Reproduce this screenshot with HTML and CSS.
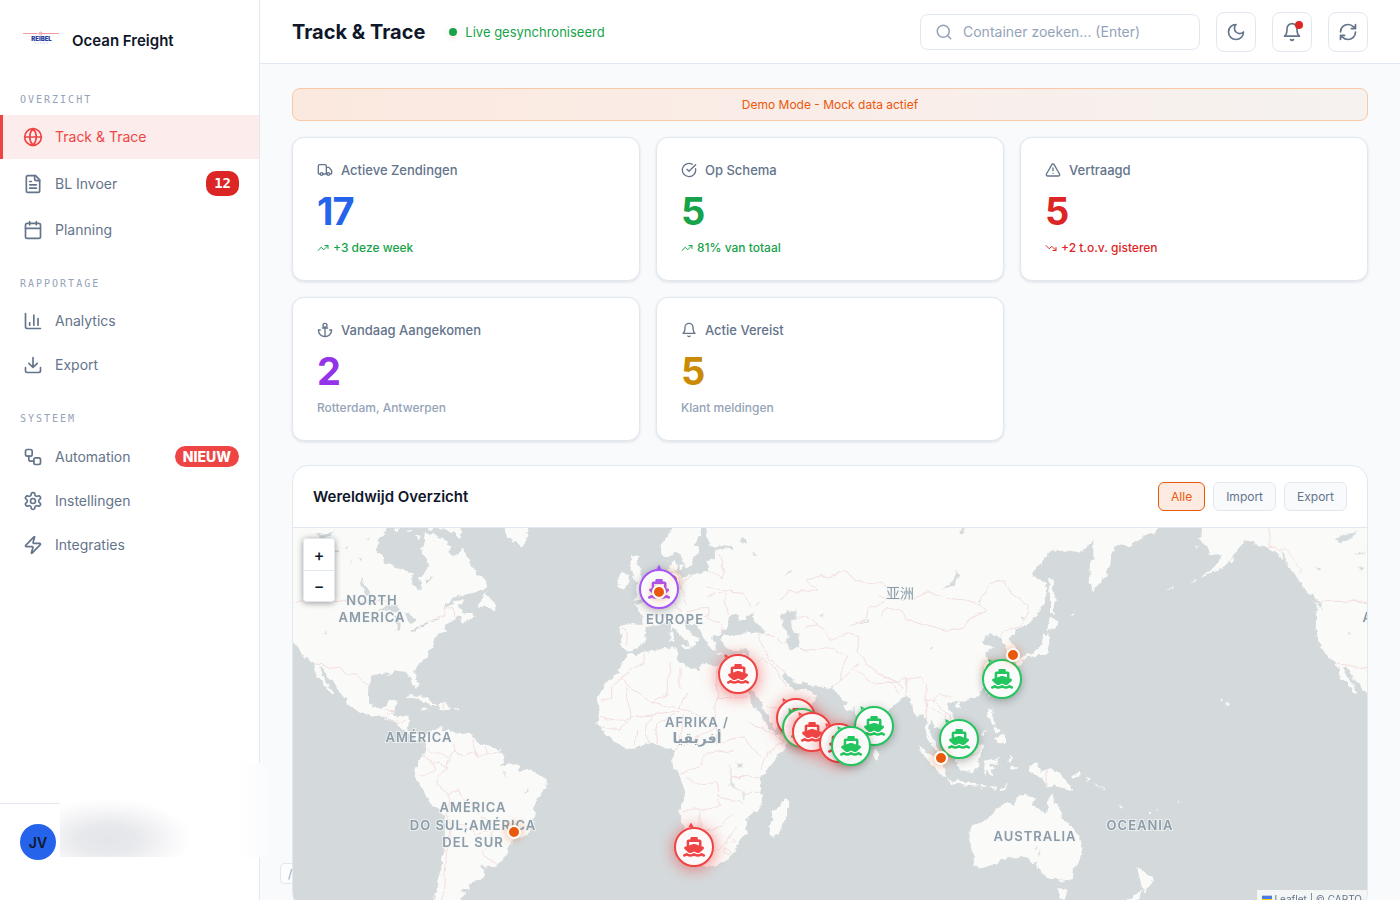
FILE: index.html
```html
<!DOCTYPE html>
<html lang="nl">
<head>
<meta charset="utf-8">
<title>Track &amp; Trace - Ocean Freight</title>
<link rel="stylesheet" href="styles.css">
</head>
<body>
<svg class="sprite" aria-hidden="true">
  <symbol id="globe" viewBox="0 0 24 24"><circle cx="12" cy="12" r="10"/><path d="M2 12h20M12 2a15.3 15.3 0 0 1 4 10 15.3 15.3 0 0 1-4 10 15.3 15.3 0 0 1-4-10 15.3 15.3 0 0 1 4-10z"/></symbol>
  <symbol id="file" viewBox="0 0 24 24"><path d="M15 2H6a2 2 0 0 0-2 2v16a2 2 0 0 0 2 2h12a2 2 0 0 0 2-2V7z"/><path d="M14 2v4a2 2 0 0 0 2 2h4M10 9H8M16 13H8M16 17H8"/></symbol>
  <symbol id="calendar" viewBox="0 0 24 24"><path d="M8 2v4M16 2v4M3 10h18"/><rect x="3" y="4" width="18" height="18" rx="2"/></symbol>
  <symbol id="chart" viewBox="0 0 24 24"><path d="M3 3v16a2 2 0 0 0 2 2h16M18 17V9M13 17V5M8 17v-3"/></symbol>
  <symbol id="download" viewBox="0 0 24 24"><path d="M21 15v4a2 2 0 0 1-2 2H5a2 2 0 0 1-2-2v-4M7 10l5 5 5-5M12 15V3"/></symbol>
  <symbol id="workflow" viewBox="0 0 24 24"><rect x="3" y="3" width="8" height="8" rx="2"/><path d="M7 11v4a2 2 0 0 0 2 2h4"/><rect x="13" y="13" width="8" height="8" rx="2"/></symbol>
  <symbol id="gear" viewBox="0 0 24 24"><path d="M12.22 2h-.44a2 2 0 0 0-2 2v.18a2 2 0 0 1-1 1.73l-.43.25a2 2 0 0 1-2 0l-.15-.08a2 2 0 0 0-2.73.73l-.22.38a2 2 0 0 0 .73 2.73l.15.1a2 2 0 0 1 1 1.72v.51a2 2 0 0 1-1 1.74l-.15.09a2 2 0 0 0-.73 2.73l.22.38a2 2 0 0 0 2.73.73l.15-.08a2 2 0 0 1 2 0l.43.25a2 2 0 0 1 1 1.73V20a2 2 0 0 0 2 2h.44a2 2 0 0 0 2-2v-.18a2 2 0 0 1 1-1.73l.43-.25a2 2 0 0 1 2 0l.15.08a2 2 0 0 0 2.73-.73l.22-.39a2 2 0 0 0-.73-2.73l-.15-.08a2 2 0 0 1-1-1.74v-.5a2 2 0 0 1 1-1.74l.15-.09a2 2 0 0 0 .73-2.73l-.22-.38a2 2 0 0 0-2.73-.73l-.15.08a2 2 0 0 1-2 0l-.43-.25a2 2 0 0 1-1-1.73V4a2 2 0 0 0-2-2z"/><circle cx="12" cy="12" r="3"/></symbol>
  <symbol id="zap" viewBox="0 0 24 24"><path d="M4 14a1 1 0 0 1-.78-1.63l9.9-10.2a.5.5 0 0 1 .86.46l-1.92 6.02A1 1 0 0 0 13 10h7a1 1 0 0 1 .78 1.63l-9.9 10.2a.5.5 0 0 1-.86-.46l1.92-6.02A1 1 0 0 0 11 14z"/></symbol>
  <symbol id="search" viewBox="0 0 24 24"><circle cx="11" cy="11" r="8"/><path d="m21 21-4.3-4.3"/></symbol>
  <symbol id="moon" viewBox="0 0 24 24"><path d="M12 3a6 6 0 0 0 9 9 9 9 0 1 1-9-9z"/></symbol>
  <symbol id="bell" viewBox="0 0 24 24"><path d="M6 8a6 6 0 0 1 12 0c0 7 3 9 3 9H3s3-2 3-9M10.3 21a1.94 1.94 0 0 0 3.4 0"/></symbol>
  <symbol id="refresh" viewBox="0 0 24 24"><path d="M3 12a9 9 0 0 1 9-9 9.75 9.75 0 0 1 6.74 2.74L21 8M21 3v5h-5M21 12a9 9 0 0 1-9 9 9.75 9.75 0 0 1-6.74-2.74L3 16M8 16H3v5"/></symbol>
  <symbol id="truck" viewBox="0 0 24 24"><path d="M14 18V6a2 2 0 0 0-2-2H4a2 2 0 0 0-2 2v11a1 1 0 0 0 1 1h2M15 18H9M19 18h2a1 1 0 0 0 1-1v-3.65a1 1 0 0 0-.22-.62l-3.48-4.35A1 1 0 0 0 17.52 8H14"/><circle cx="17" cy="18" r="2"/><circle cx="7" cy="18" r="2"/></symbol>
  <symbol id="check" viewBox="0 0 24 24"><path d="M21.8 10A10 10 0 1 1 17 3.34M9 11l3 3L22 4"/></symbol>
  <symbol id="alert" viewBox="0 0 24 24"><path d="m21.73 18-8-14a2 2 0 0 0-3.48 0l-8 14A2 2 0 0 0 4 21h16a2 2 0 0 0 1.73-3M12 9v4M12 17h.01"/></symbol>
  <symbol id="anchor" viewBox="0 0 24 24"><path d="M12 22V8M5 12H2a10 10 0 0 0 20 0h-3M8 9h8"/><circle cx="12" cy="5" r="3"/></symbol>
  <symbol id="up" viewBox="0 0 24 24"><path d="m22 7-8.5 8.5-5-5L2 17M16 7h6v6"/></symbol>
  <symbol id="down" viewBox="0 0 24 24"><path d="m22 17-8.5-8.5-5 5L2 7M16 17h6v-6"/></symbol>
</svg>

<div class="app">
  <aside class="sidebar">
    <div class="brand">
      <svg class="logo" viewBox="0 0 40 40" aria-hidden="true">
        <path d="M3 12.500h14.500M22 12.500h17" stroke="#f29aa2"/>
        <circle cx="20.500" cy="12.500" r="1.500" fill="#f7c4c8" stroke="#ee8d97" stroke-width=".7"/>
        <text x="21.500" y="20" text-anchor="middle" class="logo-name">REIBEL</text>
        <path d="M14 22h14" stroke="#bcc6e4" stroke-width=".7" stroke-dasharray="2 1"/>
      </svg>
      <span class="brand-name">Ocean Freight</span>
    </div>
    <nav class="nav">
      <section class="nav-group">
        <h2 class="nav-title">OVERZICHT</h2>
        <a class="nav-item active" href="#"><svg class="icon"><use href="#globe"/></svg><span>Track &amp; Trace</span></a>
        <a class="nav-item" href="#"><svg class="icon"><use href="#file"/></svg><span>BL Invoer</span><b class="count">12</b></a>
        <a class="nav-item" href="#"><svg class="icon"><use href="#calendar"/></svg><span>Planning</span></a>
      </section>
      <section class="nav-group">
        <h2 class="nav-title">RAPPORTAGE</h2>
        <a class="nav-item" href="#"><svg class="icon"><use href="#chart"/></svg><span>Analytics</span></a>
        <a class="nav-item" href="#"><svg class="icon"><use href="#download"/></svg><span>Export</span></a>
      </section>
      <section class="nav-group">
        <h2 class="nav-title">SYSTEEM</h2>
        <a class="nav-item" href="#"><svg class="icon"><use href="#workflow"/></svg><span>Automation</span><b class="new">NIEUW</b></a>
        <a class="nav-item" href="#"><svg class="icon"><use href="#gear"/></svg><span>Instellingen</span></a>
        <a class="nav-item" href="#"><svg class="icon"><use href="#zap"/></svg><span>Integraties</span></a>
      </section>
    </nav>
    <div class="user"><div class="avatar">JV</div><div class="user-mask"></div></div>
  </aside>

  <div class="page">
    <header class="topbar">
      <h1 class="title">Track &amp; Trace</h1>
      <div class="live"><i class="live-dot"></i>Live gesynchroniseerd</div>
      <label class="search"><svg class="icon search-icon"><use href="#search"/></svg><input type="text" placeholder="Container zoeken... (Enter)" aria-label="Container zoeken"></label>
      <button class="tool" aria-label="Donker thema"><svg class="icon"><use href="#moon"/></svg></button>
      <button class="tool" aria-label="Meldingen"><svg class="icon"><use href="#bell"/></svg><i class="tool-dot"></i></button>
      <button class="tool" aria-label="Vernieuwen"><svg class="icon"><use href="#refresh"/></svg></button>
    </header>

    <kbd class="shortcut">/</kbd>

    <main class="content">
      <div class="banner">Demo Mode - Mock data actief</div>
      <div class="stats">
        <article class="stat"><h3><svg class="icon"><use href="#truck"/></svg>Actieve Zendingen</h3><p class="value blue">17</p><p class="note green"><svg class="icon"><use href="#up"/></svg>+3 deze week</p></article>
        <article class="stat"><h3><svg class="icon"><use href="#check"/></svg>Op Schema</h3><p class="value green">5</p><p class="note green"><svg class="icon"><use href="#up"/></svg>81% van totaal</p></article>
        <article class="stat"><h3><svg class="icon"><use href="#alert"/></svg>Vertraagd</h3><p class="value red">5</p><p class="note red"><svg class="icon"><use href="#down"/></svg>+2 t.o.v. gisteren</p></article>
        <article class="stat"><h3><svg class="icon"><use href="#anchor"/></svg>Vandaag Aangekomen</h3><p class="value purple">2</p><p class="note">Rotterdam, Antwerpen</p></article>
        <article class="stat"><h3><svg class="icon"><use href="#bell"/></svg>Actie Vereist</h3><p class="value amber">5</p><p class="note">Klant meldingen</p></article>
      </div>

      <section class="map-card">
        <div class="map-head">
          <h2>Wereldwijd Overzicht</h2>
          <div class="filters">
            <button class="filter selected">Alle</button>
            <button class="filter">Import</button>
            <button class="filter">Export</button>
          </div>
        </div>
        <div class="map">
          <svg class="world" viewBox="293 528 1074 380" preserveAspectRatio="xMidYMid slice" role="img" aria-label="Wereldkaart">
            <defs>
              <filter id="coast" filterUnits="userSpaceOnUse" x="280" y="515" width="1100" height="410">
                <feTurbulence type="fractalNoise" baseFrequency=".16" numOctaves="3" seed="4"/>
                <feDisplacementMap in="SourceGraphic" scale="6" xChannelSelector="R" yChannelSelector="G"/>
              </filter>
              <filter id="frontier" filterUnits="userSpaceOnUse" x="280" y="515" width="1100" height="410">
                <feTurbulence type="fractalNoise" baseFrequency=".08" numOctaves="2" seed="4"/>
                <feDisplacementMap in="SourceGraphic" scale="7" xChannelSelector="R" yChannelSelector="G"/>
              </filter>
              <g id="ship">
                <circle r="19" fill="#fff" fill-opacity=".95" stroke="currentColor" stroke-width="2"/>
                <path transform="translate(-11 -10) scale(.0385)" fill="currentColor" d="M192 32c0-17.700 14.300-32 32-32H352c17.700 0 32 14.300 32 32V64h48c26.500 0 48 21.500 48 48V240l44.400 14.800c23.100 7.700 29.500 37.500 11.500 53.900l-101 92.600c-16.200 9.400-34.700 15.100-50.900 15.100c-19.600 0-40.800-7.700-59.200-20.300c-22.100-15.500-51.600-15.500-73.700 0c-17.100 11.800-38 20.300-59.200 20.300c-16.200 0-34.700-5.700-50.900-15.100l-101-92.600c-18-16.500-11.600-46.200 11.500-53.900L96 240V112c0-26.500 21.500-48 48-48h48V32zM160 218.700l107.800-35.900c13.100-4.400 27.300-4.400 40.500 0L416 218.700V128H160v90.700zM306.500 421.900C329 437.400 356.500 448 384 448c26.900 0 55.400-10.800 77.400-26.100c11.900-8.500 28.100-7.800 39.200 1.700c14.400 11.900 32.500 21 50.600 25.200c17.200 4 27.900 21.200 23.900 38.400s-21.200 27.900-38.400 23.900c-24.500-5.700-44.900-16.500-58.200-25C449.500 501.700 417 512 384 512c-31.900 0-60.600-9.900-80.400-18.900c-5.800-2.700-11.100-5.300-15.600-7.700c-4.500 2.400-9.700 5.100-15.600 7.700c-19.800 9-48.500 18.900-80.400 18.900c-33 0-65.500-10.300-94.500-25.800c-13.400 8.400-33.700 19.300-58.200 25c-17.200 4-34.400-6.700-38.400-23.900s6.700-34.400 23.900-38.400c18.100-4.200 36.200-13.300 50.600-25.200c11.100-9.400 27.300-10.100 39.200-1.700C136.700 437.200 165.100 448 192 448c27.500 0 55-10.600 77.500-26.100c11.100-7.900 25.900-7.900 37 0z"/>
              </g>
              <path id="heading" fill="currentColor" d="M-13.500-20 -9-17.500 -12-17 -13-15z"/>
              <path id="heading-up" fill="currentColor" d="M0-24.500 2.500-20h-5z"/>
              <g id="port"><circle r="6" fill="#ea580c" stroke="#fff" stroke-width="2"/></g>
            </defs>

            <g class="land" filter="url(#coast)">
              <!-- Americas -->
              <g transform="translate(290 460) scale(.33333)">
                <path d="M-30 180H300L285 216 270 235 262 258 261 275 276 282 282 306 300 314 330 328 350 332 368 340 366 368 384 394 396 386 390 368 384 350 400 345 413 322 413 300 400 285 396 268 404 262 402 240 404 220 420 222 438 224 448 236 464 234 474 242 470 254 482 262 478 275 490 290 505 280 518 260 522 276 530 292 538 296 545 318 560 332 565 345 575 350 590 362 590 380 575 388 560 396 545 400 520 404 500 406 485 420 470 432 462 450 480 435 500 422 520 420 516 430 506 438 516 448 518 458 530 462 545 462 555 466 545 474 530 480 515 490 508 484 520 472 508 470 495 476 480 484 468 492 465 504 470 514 455 518 440 524 432 540 425 552 424 564 416 572 420 586 410 596 395 606 378 620 372 632 376 650 383 670 382 684 370 676 362 660 358 642 345 636 325 633 308 632 304 646 290 641 270 640 250 646 240 658 235 680 234 710 242 730 258 744 275 742 290 738 298 722 325 718 322 735 312 745 314 756 308 765 320 770 355 770 357 782 352 795 356 812 370 825 385 824 400 818 408 828 395 836 375 838 358 826 340 808 325 798 318 786 300 780 280 770 262 768 245 770 215 758 180 738 168 728 168 715 140 682 118 655 98 625 88 622 95 645 110 665 118 680 133 698 130 704 110 688 98 665 80 645 76 625 68 606 45 592 30 570 15 550 -30 520z"/>
                <path d="M400 833 420 815 440 808 458 800 455 815 475 808 490 820 530 818 548 822 545 832 560 842 575 855 600 858 625 865 635 880 642 905 632 915 655 912 685 920 690 932 725 932 750 945 770 958 770 980 752 1002 738 1020 735 1050 732 1075 728 1095 715 1125 690 1130 670 1145 652 1160 652 1180 640 1195 625 1212 605 1224 580 1222 568 1212 582 1235 580 1250 565 1262 538 1268 535 1290 512 1290 525 1302 512 1318 510 1360H430L434 1300 444 1296 442 1260 455 1225 458 1180 468 1140 466 1065 440 1045 418 1028 412 1012 395 985 382 962 375 945 378 925 385 905 395 890 408 880 408 850z"/>
                <path d="M625 180H724L708 225 705 250 695 264 680 248 665 246 650 225zM592 386 585 402 600 415 615 430 616 452 600 445 588 440 565 440 572 424 580 405zM345 712 360 702 385 705 405 715 425 725 443 738 425 738 405 728 385 715 365 710zM448 732 465 731 485 744 470 750 445 748zM398 746 415 746 415 751 402 751zM492 745 507 746 507 751 493 751zM405 180H516L514 225 512 236 500 222 488 210 480 222 465 206 440 204 420 214zM350 212 368 210 358 222zM375 226 392 224 386 240zM312 204 330 204 322 214z"/>
              </g>
              <!-- Europe, Africa, west Asia -->
              <g transform="translate(600 520) scale(.33333)">
                <path d="M325 0H905V538L880 555 850 590 825 630 812 660 800 680 788 660 775 625 766 590 763 560 755 575 735 565 728 555 745 548 725 540 715 525 700 502 660 500 625 498 612 488 590 490 570 475 555 458 548 462 555 480 570 495 580 510 590 515 605 510 618 505 640 520 648 530 635 560 615 580 580 600 560 615 535 622 525 630 515 605 500 580 480 545 460 515 445 500 440 505 455 545 475 575 490 600 510 630 530 645 575 632 572 660 550 690 520 725 495 755 482 775 480 800 486 830 485 860 460 880 438 900 440 935 420 955 410 985 385 1015 355 1035 310 1042 295 1030 285 990 265 950 250 920 238 875 255 830 250 800 240 770 218 740 222 705 215 685 190 688 165 672 140 668 110 685 75 688 45 665 15 640 -8 615 -5 595 -2 560 -8 538 5 510 25 480 55 460 60 435 80 410 88 400 110 405 140 395 180 388 230 385 235 400 230 415 240 430 265 440 295 450 305 435 325 430 350 440 410 440 435 440 445 420 448 395 440 385 415 390 385 388 370 375 362 360 370 345 395 345 440 335 490 345 495 330 470 310 455 295 465 280 440 290 435 300 420 300 410 285 395 280 385 300 380 320 370 335 350 346 335 350 350 370 345 395 335 390 325 370 310 350 302 330 285 315 260 305 250 300 258 325 280 345 298 355 290 360 278 378 270 385 262 365 240 345 225 325 210 310 190 310 165 318 140 325 138 345 130 370 110 385 90 395 82 390 60 380 65 345 60 318 85 312 125 315 128 290 115 270 105 255 125 250 155 235 200 190 215 170 205 150 210 130 225 120 230 140 225 155 245 170 270 165 310 160 325 150 320 120 345 115 345 90 375 85 400 88 395 78 360 75 335 80 320 60 320 40z"/>
                <path d="M235 0H310L300 45 285 75 300 95 280 110 275 135 260 145 250 125 240 100 225 95 205 115 185 105 182 75 205 45zM95 105 120 108 110 130 125 145 125 165 140 200 145 225 120 240 100 242 112 225 105 205 112 190 100 170 90 140zM65 160 88 165 88 190 70 210 52 200 55 175zM560 832 568 860 555 895 535 945 520 950 508 925 518 900 515 875 540 860zM208 335 220 335 220 362 210 362zM212 315 219 315 218 331 212 331zM240 378 268 376 264 390zM345 400 372 402 360 407zM420 396 438 396 428 404zM822 688 838 702 832 722 820 716zM236 130 250 132 248 150 236 148z"/>
              </g>
              <!-- East Asia and Oceania -->
              <g transform="translate(880 520) scale(.33333)">
                <path d="M-5 0H800V40L755 80 725 72 700 85 690 110 688 140 665 175 640 215 628 180 630 130 650 100 675 75 700 65 705 40 690 38 680 65 650 50 620 82 600 98 570 92 515 92 490 120 455 162 478 178 498 190 500 220 492 250 470 285 450 308 430 320 410 325 400 340 385 355 395 370 408 385 415 405 405 415 385 410 378 385 375 375 362 370 365 355 345 350 335 342 320 350 305 365 310 378 345 380 320 395 318 410 330 430 335 450 325 490 305 515 285 530 260 540 240 548 225 545 205 545 205 560 220 585 230 610 225 630 205 645 195 650 190 635 170 620 160 605 150 600 148 625 150 645 165 665 178 690 182 705 165 690 148 662 138 640 140 610 130 580 112 590 100 570 95 545 80 528 60 535 40 550 15 575 -5 590z"/>
                <path d="M505 175 518 172 520 215 530 240 518 260 525 285 510 280 510 230zM505 340 508 370 498 405 465 405 435 418 415 440 405 430 410 415 440 405 465 395 485 370 490 345zM510 290 540 310 525 325 500 330zM110 680 135 688 165 715 195 745 202 775 180 765 155 735 130 705zM200 778 240 785 280 790 295 800 260 797 215 790zM228 715 250 700 290 680 305 670 315 685 300 710 295 735 280 757 240 750 230 735zM315 725 345 718 362 712 345 730 325 735 345 745 335 752 340 770 328 765 322 745 315 770 312 750zM445 735 470 730 480 755 510 745 540 760 555 780 580 815 550 805 530 795 500 803 490 780 460 760 445 750zM325 565 340 570 340 600 350 620 335 610 325 590zM345 650 375 645 375 675 355 668zM340 622 362 625 360 640 346 638zM225 555 240 550 240 565 228 565zM300 645 320 628 316 640zM300 796 320 797 318 803 302 802zM330 798 350 800 348 806 332 805zM355 808 382 796 378 804 362 813zM388 704 396 710 392 730 386 722zM390 742 415 742 412 750 392 748zM572 770 600 755 602 764 580 776zM618 774 630 784 622 784zM642 788 660 800 650 798zM665 802 682 816 672 812zM718 852 728 866 722 866zM565 295 582 280 578 288zM316 475 328 510 330 530 318 515z"/>
                <path d="M270 920 290 910 325 895 345 875 365 855 385 850 405 855 410 835 430 828 465 832 455 855 480 870 498 880 505 840 514 820 525 850 540 865 545 895 575 920 600 950 608 985 600 1015 580 1045 575 1075 550 1085 530 1078 500 1075 485 1055 470 1045 472 1025 455 1030 440 1012 400 1012 370 1018 345 1035 300 1045 280 1038 285 1010 270 980 268 945zM532 1105 563 1108 555 1135 540 1138z"/>
              </g>
              <!-- Pacific and western North America -->
              <g transform="translate(1100 460) scale(.33333)">
                <path d="M-20 180H168V216L140 222 115 240 90 262 65 256 42 265 30 290 22 320 20 345 5 365 -20 372zM305 180H840V740L803 705 760 655 740 622 730 622 735 640 758 675 775 698 770 704 745 675 722 650 715 625 708 606 685 592 655 545 650 510 652 445 640 425 615 390 598 365 590 345 570 330 545 295 525 275 500 262 470 252 440 240 420 262 400 290 370 318 330 342 300 350 340 325 360 300 365 282 330 285 325 262 300 240z"/>
                <path d="M112 1220 135 1240 160 1255 145 1280 132 1300 128 1290 120 1260zM125 1290 118 1305 95 1360H60L85 1320zM376 730 386 730 386 740 378 740zM358 716 366 718 362 722zM150 1056 160 1056 158 1062 150 1062zM162 1050 174 1048 172 1052zM58 1034 64 1044 60 1044zM390 300 408 290 405 305 392 310zM285 258 298 260 292 266zM270 370 290 358 288 364zM200 386 222 382 220 386zM0 980 12 986 8 990zM235 1020 242 1024 238 1026z"/>
              </g>
            </g>

            <g class="water" filter="url(#coast)">
              <g transform="translate(290 460) scale(.33333)">
                <path d="M265 450 290 436 312 436 334 448 318 456 290 452zM318 468 330 466 332 510 320 512zM340 456 360 462 380 482 368 490 352 478zM358 512 385 502 388 506 365 516zM388 494 414 486 414 493 392 500zM212 358 222 366 240 400 232 408 218 384zM72 216 92 224 120 222 138 210 118 232 94 234zM110 275 150 270 148 276 118 280zM102 512 112 520 104 526zM404 360 430 350 412 368zM700 1000 718 984 716 992zM640 932 650 950 644 948zM425 484 450 478 430 490zM180 300 190 312 184 312zM205 290 214 296 208 300zM160 262 172 258 168 268zM226 240 236 234 232 244z"/>
              </g>
              <g transform="translate(600 520) scale(.33333)">
                <path d="M540 290 560 272 590 275 585 300 570 310 575 330 595 345 598 380 575 390 560 370 565 345 550 320zM410 728 428 728 424 745 412 745zM388 750 394 780 402 802 392 795zM430 805 436 840 430 840zM425 48 445 70 435 75 422 58zM458 98 470 104 462 112zM550 170 562 154 580 152 564 160zM658 288 672 280 668 290zM776 308 802 302 806 306 780 312zM460 260 480 240 478 250z"/>
              </g>
              <g transform="translate(880 520) scale(.33333)">
                <path d="M186 210 212 190 234 150 236 164 220 196zM148 385 158 384 156 391zM418 295 430 290 426 300zM236 30 258 24 250 44 240 46zM465 975 474 980 472 990zM478 992 484 1000 478 1010zM296 244 306 236 302 248z"/>
              </g>
              <g transform="translate(1100 460) scale(.33333)">
                <path d="M705 238 745 222 775 210 748 240 720 246zM760 284 800 274 790 282zM614 398 640 408 664 430 664 444 640 424 618 406zM576 350 590 354 588 384zM745 515 755 522 748 524zM645 318 664 330 654 330zM780 318 790 324 784 332zM545 275 556 290 564 318 550 300z"/>
              </g>
            </g>

            <g class="borders" filter="url(#frontier)">
              <g transform="translate(290 460) scale(.33333)">
                <path d="M-10 424H290M415 485 440 470 462 462 470 448 492 446 494 470M68 608 95 612 120 625 150 622 175 645 200 645 215 665 238 678M280 750 310 748M290 765 312 745M300 782 322 780M318 795 350 775M395 892 425 905 435 925 410 945 385 948M425 905 450 910 475 928M478 840 490 850 495 870 478 882 475 928 445 945 440 975 470 1000 510 990 520 1018 550 1030 570 1060 600 1085M495 870 520 888 555 878 560 890 590 885 615 885 632 875M470 1000 480 1020 470 1065 485 1100 470 1180 465 1240 455 1344M500 1090 530 1098 560 1125 605 1110 600 1150 575 1180 620 1212M545 840 560 885M585 858 595 885M458 732 460 748M400 850 420 875 475 890"/>
              </g>
              <g transform="translate(600 520) scale(.33333)">
                <path d="M66 328 82 328 80 380M125 315 158 325M128 390 130 425 60 475 35 500 35 535 0 540M60 475 155 550 200 525 215 420M80 500 90 595 20 600 0 590M155 550 240 560 260 515M240 500 240 445M350 440 350 532 440 534M350 532 345 610 240 560M350 610 350 670 430 650 480 710M0 620 60 630 90 590 160 585M105 675 110 630M140 668 140 610 160 585 240 570M165 672 170 610 225 580M225 690 245 640 250 580M245 680 345 620M240 760 300 740 320 700 400 690M255 770 280 790 350 785 355 860 245 875M390 735 390 770 480 770M355 830 430 850M300 875 300 1000 360 990 410 920M300 930 360 920 400 880M385 795 440 820 485 820M440 600 520 640 550 670 500 700 480 750M458 440 490 410 520 440 560 500M500 560 600 560 630 530M370 340 360 310 320 290 330 260 300 260 260 275M260 260 240 205 270 165M180 270 220 245 240 275M320 200 370 215 430 220 450 260M330 150 370 180 370 130 350 90M320 230 370 220 385 280M470 345 500 400 530 440 560 460M495 345 530 350 560 370M600 385 650 390 690 380 740 410 720 480 690 500M620 320 650 315 700 360 740 340 780 350 770 400 830 460 910 500M540 240 570 215 650 210 620 180 740 155 770 185 850 190 870 230 810 270 800 300 750 320M650 315 620 290 590 300M770 450 830 490 890 490M720 480 780 430"/>
                <path d="M382 985a8 8 0 1 0 5 8zM402 955a6 6 0 1 0 5 6z"/>
              </g>
              <g transform="translate(880 520) scale(.33333)">
                <path d="M0 290 20 260 60 270 80 295 150 320 200 335 250 320 270 290 320 270 300 255 260 240 200 235 140 210 100 235 40 240 0 225M300 240 330 190 370 185 400 225 445 255 440 290 420 320 380 330 360 352M0 460 50 490 80 475 80 525M80 480 120 475 140 495 135 540 160 545 180 520 210 535M150 560 200 590 195 620M135 540 140 600M165 545 200 575 215 600M30 490 60 520M498 748V800M385 390 405 390M240 715 270 710 300 685"/>
              </g>
              <g transform="translate(1100 460) scale(.33333)">
                <path d="M506 180V258L525 262 540 275 555 265 575 290 585 310 600 325V340M664 424H830M712 610 740 612 765 625 800 619 840 624"/>
              </g>
            </g>

            <g class="labels">
              <text x="372" y="605">NORTH</text><text x="372" y="622">AMERICA</text>
              <text x="419" y="742">AMÉRICA</text>
              <text x="473" y="812">AMÉRICA</text><text x="473" y="830">DO SUL;AMÉRICA</text><text x="473" y="847">DEL SUR</text>
              <text x="675" y="624">EUROPE</text><text x="697" y="727">AFRIKA /</text><text x="697" y="743" class="arabic">أفريقيا</text>
              <text x="900" y="598" class="cjk">亚洲</text><text x="1035" y="841">AUSTRALIA</text><text x="1140" y="830">OCEANIA</text>
              <text x="1396" y="622">AMERICA</text>
            </g>

            <g class="ports-behind"><use href="#port" x="672" y="580"/><use href="#port" x="991" y="668"/></g>
            <g class="ships">
              <g class="ship arrived" transform="translate(659 589)"><use href="#heading-up"/><use href="#ship"/></g>
              <g class="ship late" transform="translate(738 674)"><use href="#heading"/><use href="#ship"/></g>
              <g class="ship ontime" transform="translate(1002 679)"><use href="#heading"/><use href="#ship"/></g>
              <g class="ship late" transform="translate(796 718)"><use href="#heading"/><use href="#ship"/></g>
              <g class="ship ontime" transform="translate(874 726)"><use href="#heading"/><use href="#ship"/></g>
              <g class="ship ontime" transform="translate(802 728)"><use href="#ship"/><use href="#heading"/></g>
              <g class="ship late" transform="translate(812 732)"><use href="#ship"/><use href="#heading"/></g>
              <g class="ship ontime" transform="translate(959 739)"><use href="#heading"/><use href="#ship"/></g>
              <g class="ship late" transform="translate(839 743)"><use href="#ship"/><use href="#heading"/></g>
              <g class="ship ontime" transform="translate(851 746)"><use href="#ship"/><use href="#heading"/></g>
              <g class="ship late" transform="translate(694 847)"><use href="#heading-up" x="-3"/><use href="#ship"/></g>
            </g>
            <g class="ports">
              <use href="#port" x="659" y="592"/><use href="#port" x="514" y="832"/><use href="#port" x="1013" y="655"/><use href="#port" x="941" y="758"/>
            </g>
          </svg>
          <div class="zoom"><button aria-label="Inzoomen">+</button><button aria-label="Uitzoomen">−</button></div>
          <div class="credit"><svg viewBox="0 0 12 8" aria-hidden="true"><path fill="#4c7be1" d="M0 0h12v4H0z"/><path fill="#ffd500" d="M0 4h12v3H0z"/><path fill="#e0bc00" d="M0 7h12v1H0z"/></svg><a href="#">Leaflet</a> | © CARTO</div>
        </div>
      </section>
    </main>
  </div>
</div>
</body>
</html>
```

FILE: styles.css
```css
* { box-sizing: border-box; }
body { margin: 0; font-family: Inter, "Noto Sans", sans-serif; color: #0f172a; background: #f8fafc; }
h1, h2, h3, p { margin: 0; }
button, input { font: inherit; }
a { color: inherit; text-decoration: none; }
.sprite { position: absolute; width: 0; height: 0; }
.icon { width: 20px; height: 20px; flex: none; fill: none; stroke: currentColor; stroke-width: 2; stroke-linecap: round; stroke-linejoin: round; }

.app { display: flex; height: 100vh; overflow: hidden; }

/* Sidebar */
.sidebar { width: 260px; flex: none; display: flex; flex-direction: column; background: #fff; border-right: 1px solid #e2e8f0; z-index: 2; }
.brand { display: flex; align-items: center; gap: 12px; height: 80px; padding: 2px 20px 0; }
.logo { width: 40px; height: 40px; }
.logo-name { font-size: 6px; font-weight: 900; fill: #29409c; }
.brand-name { font-size: 15px; font-weight: 600; line-height: 20px; }
.nav { flex: 1; padding-top: 12px; }
.nav-group { margin-bottom: 24px; }
.nav-title { padding: 0 20px 8px; font: 400 10px/15px "DejaVu Sans Mono", "Liberation Mono", monospace; letter-spacing: 2px; color: #94a3b8; }
.nav-item { display: flex; align-items: center; gap: 12px; padding: 12px 20px; border-left: 3px solid transparent; font-size: 14px; line-height: 20px; color: #64748b; }
.nav-item.active { color: #ef4444; background: #fdecec; border-left-color: #ef4444; }
.count { margin-left: auto; padding: 0 8px; border-radius: 10px; background: #dc2626; color: #fff; font: 700 14px/25px "DejaVu Sans Mono", monospace; }
.new { margin-left: auto; padding: 0 8px; border-radius: 11px; background: #ef4444; color: #fff; font-size: 14px; font-weight: 800; line-height: 21px; }
.user { position: relative; height: 97px; padding: 20px; border-top: 1px solid #e2e8f0; }
.avatar { display: grid; place-items: center; width: 36px; height: 36px; border-radius: 50%; background: #2563eb; font-size: 14px; font-weight: 600; }
.user-mask { position: absolute; left: 60px; right: -9px; top: -41px; height: 94px; background: radial-gradient(ellipse 84px 40px at 48px 76px, #e4e5e8 0, #e8e9ec 35%, #f6f6f8 72%, transparent 100%), linear-gradient(90deg, #fff 86%, #fafbfd 98%); }

/* Top bar */
.page { position: relative; flex: 1; min-width: 0; display: flex; flex-direction: column; }
.topbar { display: flex; align-items: center; gap: 16px; height: 64px; flex: none; padding: 0 32px; background: #fff; border-bottom: 1px solid #e2e8f0; }
.title { font-size: 20px; font-weight: 700; line-height: 24px; }
.live { display: flex; align-items: center; gap: 8px; margin: 0 auto 0 8px; font-size: 13px; line-height: 20px; color: #16a34a; }
.live-dot { width: 8px; height: 8px; border-radius: 50%; background: #16a34a; box-shadow: 0 2px 6px rgba(239, 68, 68, .2); }
.search { display: flex; align-items: center; gap: 10px; width: 280px; height: 36px; padding: 0 14px; border: 1px solid #e2e8f0; border-radius: 8px; color: #94a3b8; }
.search-icon { width: 18px; height: 18px; }
.search input { flex: 1; min-width: 0; padding: 0; border: 0; outline: 0; background: none; font-size: 14px; }
.search input::placeholder { color: #94a3b8; opacity: 1; }
.tool { position: relative; display: grid; place-items: center; width: 40px; height: 40px; padding: 0; border: 1px solid #e2e8f0; border-radius: 8px; background: #fff; color: #64748b; }
.tool-dot { position: absolute; top: 8px; right: 8px; width: 8px; height: 8px; border-radius: 50%; background: #dc2626; }
.shortcut { position: absolute; left: 20px; bottom: 16px; width: 22px; height: 21px; padding-left: 7px; border: 1px solid #e2e8f0; border-radius: 4px; background: #fcfdfe; color: #94a3b8; font: 400 12px/19px Inter, sans-serif; }

/* Content */
.content { position: relative; flex: 1; min-height: 0; overflow: hidden; padding: 24px 32px; }
.banner { margin-bottom: 16px; padding: 8px; border: 1px solid #fbc9a5; border-radius: 8px; background: linear-gradient(90deg, #fbe9df, #f9eeea 60%, #f5f2ef); color: #ea580c; font-size: 12px; line-height: 15px; text-align: center; }
.stats { display: grid; grid-template-columns: repeat(3, 1fr); gap: 16px; margin-bottom: 24px; }
.stat { padding: 24px; border: 1px solid #e2e8f0; border-radius: 12px; background: #fff; box-shadow: 0 1px 3px rgba(15, 23, 42, .12); }
.stat h3 { display: flex; align-items: center; gap: 8px; margin-bottom: 8px; font-size: 13px; font-weight: 500; line-height: 16px; color: #64748b; }
.stat h3 .icon { width: 16px; height: 16px; }
.value { margin-bottom: 4px; font-size: 38px; font-weight: 700; line-height: 50px; letter-spacing: -1px; }
.note { display: flex; align-items: center; gap: 4px; font-size: 12px; font-weight: 500; line-height: 16px; color: #94a3b8; }
.note .icon { width: 12px; height: 12px; }
.blue { color: #2563eb; }
.green { color: #16a34a; }
.red { color: #dc2626; }
.purple { color: #9333ea; }
.amber { color: #ca8a04; }

/* Map */
.map-card { border: 1px solid #e2e8f0; border-radius: 16px; background: #fff; overflow: hidden; }
.map-head { display: flex; align-items: center; justify-content: space-between; padding: 16px 20px; border-bottom: 1px solid #e2e8f0; }
.map-head h2 { font-size: 15px; font-weight: 600; line-height: 20px; }
.filters { display: flex; gap: 8px; }
.filter { padding: 6px 12px; border: 1px solid #e2e8f0; border-radius: 6px; background: #f8fafc; color: #64748b; font-size: 12px; line-height: 15px; }
.filter.selected { border-color: #ea580c; background: #fdeae0; color: #ea580c; }
.map { position: relative; height: 380px; background: #d4dadc; }
.world { display: block; width: 100%; height: 100%; }
.land { fill: #fafaf8; }
.water { fill: #d4dadc; }
.borders { fill: none; stroke: #f3dedf; stroke-width: 3; }
.labels { font: 600 13px Inter, sans-serif; letter-spacing: 1px; text-anchor: middle; fill: #8c9ca8; stroke: #f4f6f6; stroke-opacity: .7; stroke-width: 2; paint-order: stroke; }
.labels .arabic { font: 700 14px "DejaVu Sans", sans-serif; letter-spacing: 0; }
.labels .cjk { font: 400 14px "Noto Sans CJK SC", sans-serif; letter-spacing: 0; }
.ship { filter: drop-shadow(0 2px 4px rgba(0, 0, 0, .3)); }
.arrived { color: #a855f7; }
.ontime { color: #22c55e; }
.late { color: #ef4444; filter: drop-shadow(0 2px 8px rgba(239, 68, 68, .7)); }
.ports, .ports-behind { filter: drop-shadow(0 0 5px rgba(234, 88, 12, .5)); }
.zoom { position: absolute; left: 10px; top: 10px; display: flex; flex-direction: column; border: 1px solid #e2e8f0; border-radius: 4px; overflow: hidden; box-shadow: 0 1px 6px rgba(0, 0, 0, .4); }
.zoom button { width: 30px; height: 31px; padding: 0; border: 0; background: #fff; color: #0f172a; font-size: 16px; font-weight: 500; line-height: 30px; }
.zoom button + button { border-top: 1px solid #e2e8f0; }
.credit { position: absolute; right: 0; bottom: 0; padding: 0 5px; background: rgba(255, 255, 255, .75); color: #64748b; font-size: 10px; line-height: 18px; }
.credit svg { width: 10px; height: 8px; margin-right: 2px; }
```
